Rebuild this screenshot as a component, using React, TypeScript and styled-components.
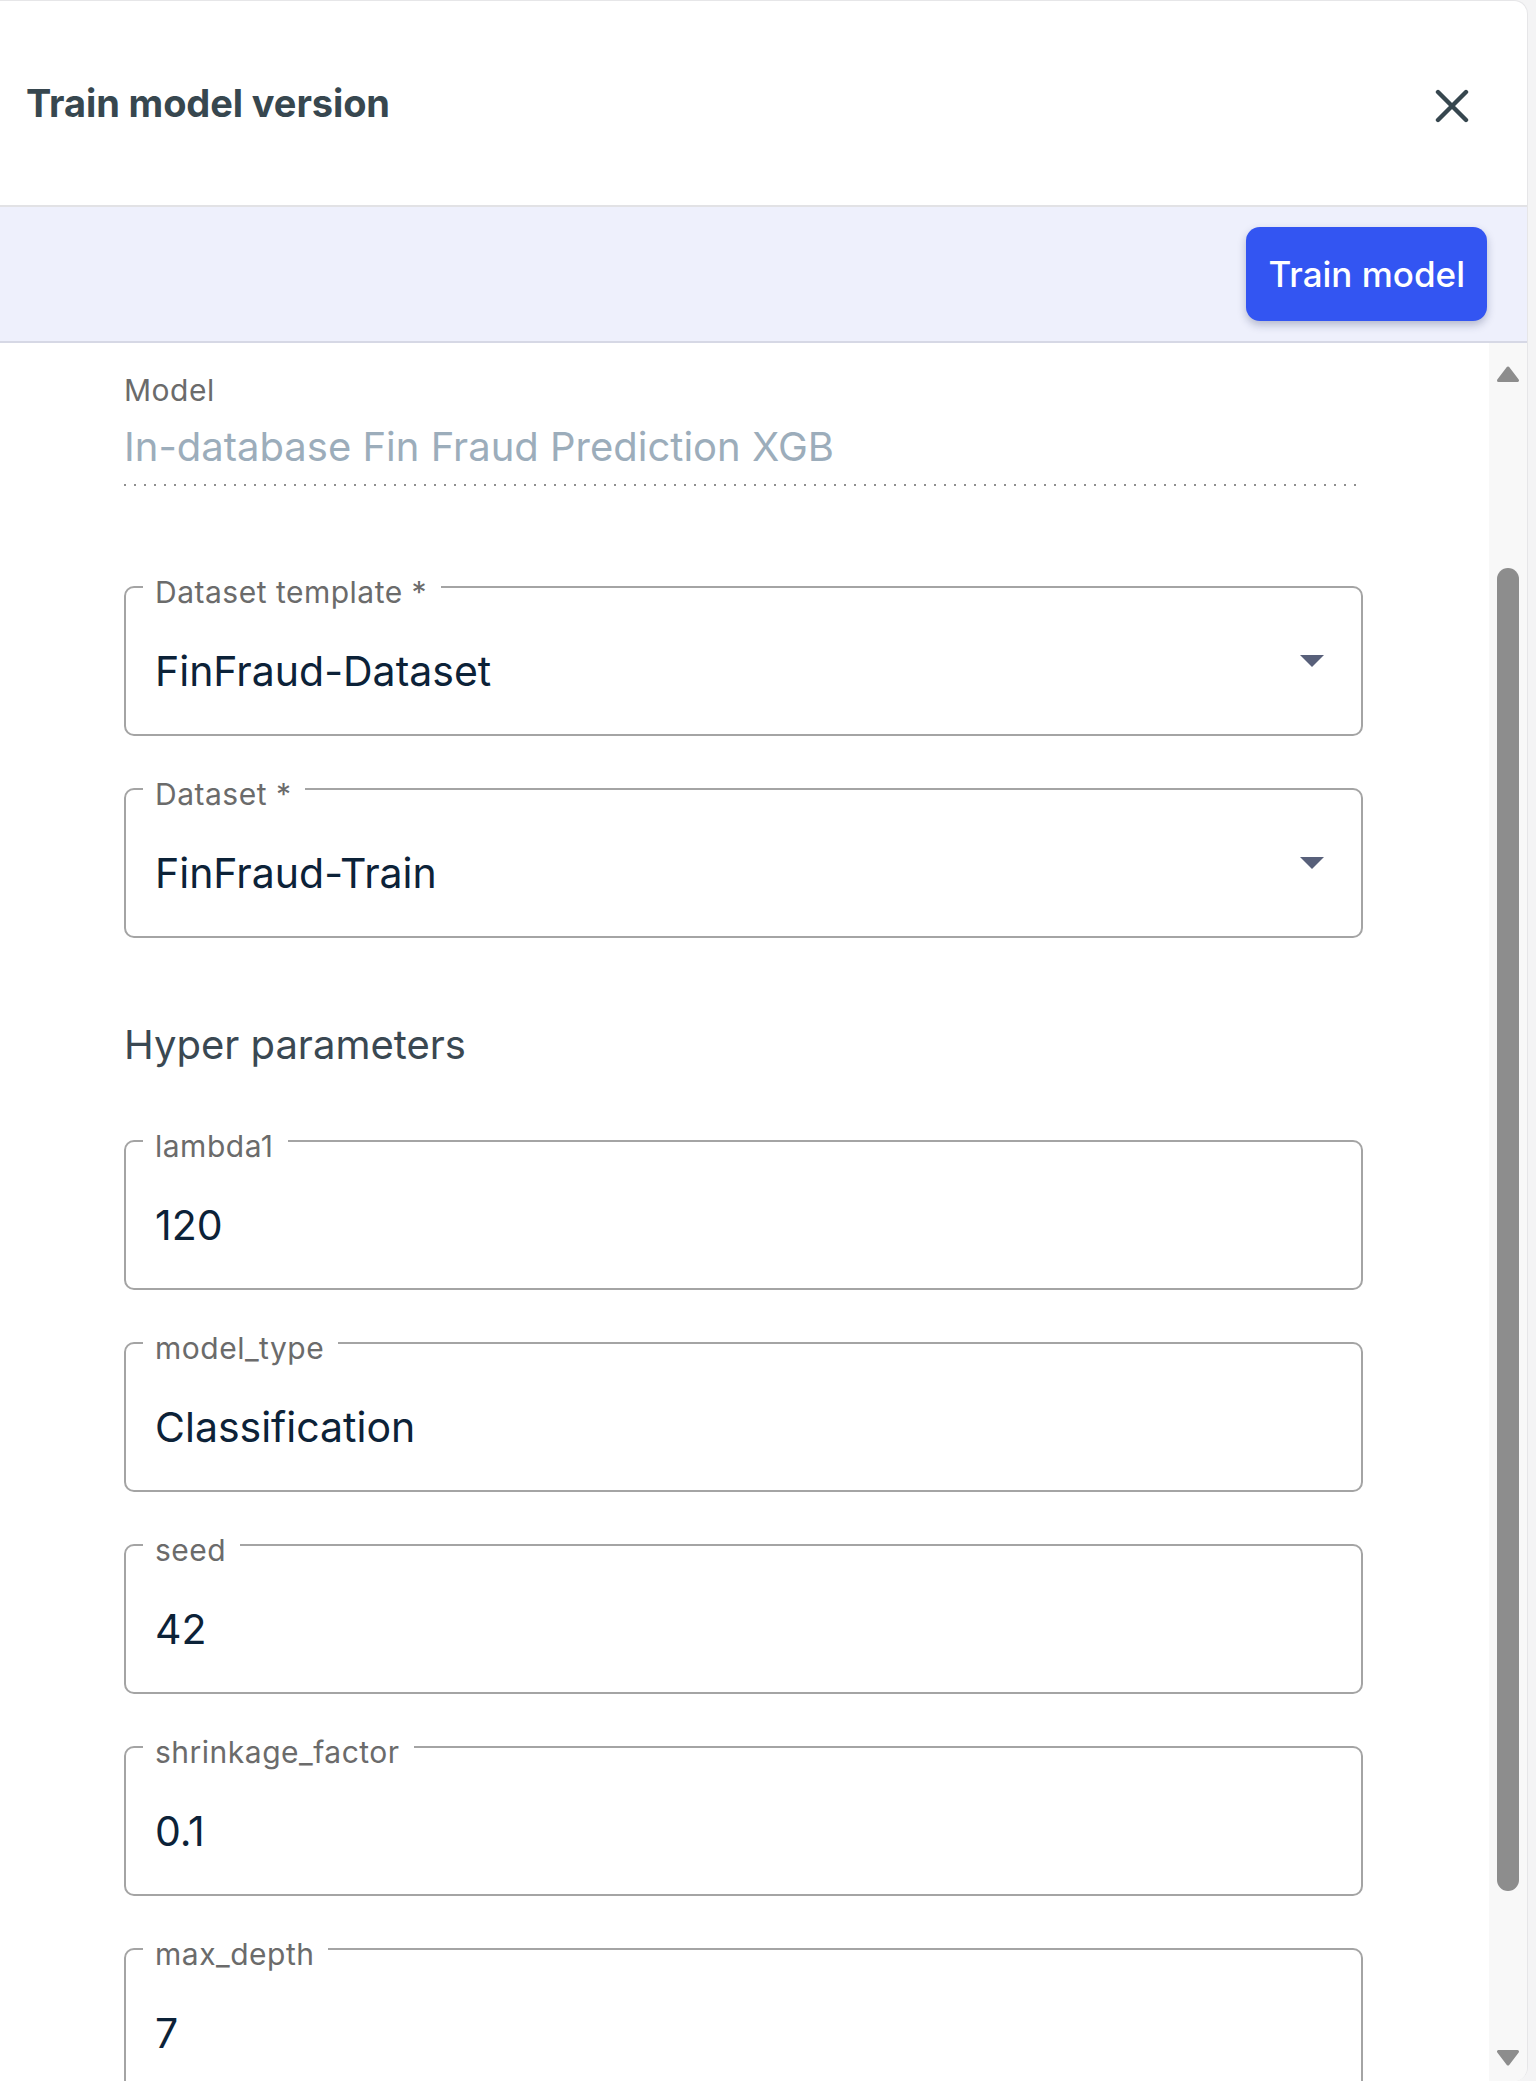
import React from "react";
import styled, { createGlobalStyle } from "styled-components";

const GlobalStyle = createGlobalStyle`
  html, body { margin: 0; padding: 0; }
  body {
    background: #f4f4f5;
    font-family: Inter, "Noto Sans", sans-serif;
    -webkit-font-smoothing: antialiased;
  }
  * { box-sizing: border-box; }
`;

const Panel = styled.div`
  width: 1528px;
  height: 2081px;
  display: flex;
  flex-direction: column;
  background: #ffffff;
  border-top: 1px solid #e6e6e8;
  border-right: 1px solid #e6e6e8;
  border-radius: 0 14px 14px 0;
  overflow: hidden;
`;

const Header = styled.header`
  height: 206px;
  flex: none;
  display: flex;
  align-items: center;
  justify-content: space-between;
  padding: 0 58px 0 26px;
  border-bottom: 2px solid #e2e2e5;
`;

const Title = styled.h2`
  margin: 0;
  font-size: 38px;
  font-weight: 700;
  color: #37474f;
  letter-spacing: -0.1px;
`;

const CloseButton = styled.button`
  border: none;
  background: none;
  padding: 0;
  margin-top: 6px;
  display: flex;
  color: #37474f;
  cursor: pointer;
`;

const Toolbar = styled.div`
  height: 136px;
  flex: none;
  display: flex;
  align-items: center;
  justify-content: flex-end;
  padding-right: 40px;
  background: #eef0fc;
  border-bottom: 2px solid #d6d8e5;
`;

const PrimaryButton = styled.button`
  height: 94px;
  padding: 0 22px;
  border: none;
  border-radius: 14px;
  background: #3355f2;
  color: #ffffff;
  font-family: Inter, sans-serif;
  font-size: 35px;
  font-weight: 500;
  box-shadow: 0 4px 8px rgba(30, 40, 90, 0.28);
  cursor: pointer;
`;

const Body = styled.div`
  flex: 1;
  min-height: 0;
  display: flex;
`;

const Content = styled.div`
  flex: 1;
  overflow: hidden;
  padding: 29px 126px 0 124px;
  display: flex;
  flex-direction: column;
`;

const StaticField = styled.div`
  display: flex;
  flex-direction: column;
  padding-bottom: 14px;
  background: linear-gradient(to right, #8e8e8e 2px, transparent 2px) left bottom / 10px 2px repeat-x;
`;

const StaticLabel = styled.span`
  font-size: 30px;
  line-height: 36px;
  color: #6b6b6b;
  letter-spacing: 0.5px;
`;

const StaticValue = styled.span`
  margin-top: 14px;
  font-size: 40px;
  line-height: 50px;
  color: #9cadbb;
`;

const FieldGroup = styled.div<{ $top: number }>`
  display: flex;
  flex-direction: column;
  gap: 33px;
  margin-top: ${(p) => p.$top}px;
`;

const SectionHeading = styled.h3`
  margin: 82px 0 0;
  font-size: 40px;
  line-height: 50px;
  font-weight: 400;
  color: #3a4852;
`;

const Outline = styled.fieldset`
  margin: 0;
  min-width: 0;
  padding: 39px 37px 38px 0;
  border: 2px solid #a4a4a4;
  border-radius: 10px;
  flex: none;
`;

const Legend = styled.legend`
  margin-left: 17px;
  padding: 10px 14px 0 12px;
  font-size: 30px;
  line-height: 30px;
  color: #6b6b6b;
  letter-spacing: 0.5px;
`;

const ValueRow = styled.div`
  display: flex;
  align-items: center;
  justify-content: space-between;
  padding-left: 29px;
`;

const Value = styled.span`
  font-size: 41px;
  line-height: 50px;
  color: #0c2238;
`;

const Caret = styled.svg`
  flex: none;
  margin-bottom: 20px;
`;

const ScrollRail = styled.div`
  width: 38px;
  flex: none;
  display: flex;
  flex-direction: column;
  align-items: center;
  padding: 22px 0 14px;
  background: #f8f8f8;
`;

const Thumb = styled.div<{ $offset: number; $size: number }>`
  width: 22px;
  height: ${(p) => p.$size}px;
  margin-top: ${(p) => p.$offset}px;
  border-radius: 11px;
  background: #8d8d8d;
  flex: none;
`;

const RailArrow = styled.svg<{ $end?: boolean }>`
  flex: none;
  margin-top: ${(p) => (p.$end ? "auto" : "0")};
`;

const CaretIcon = () => (
  <Caret width="24" height="12" viewBox="0 0 24 12">
    <path d="M0 0 H24 L12 12 Z" fill="#58607a" />
  </Caret>
);

const OutlinedField = ({ label, value, select }: { label: string; value: string; select?: boolean }) => (
  <Outline>
    <Legend>{label}</Legend>
    <ValueRow>
      <Value>{value}</Value>
      {select && <CaretIcon />}
    </ValueRow>
  </Outline>
);

const hyper = [
  { label: "lambda1", value: "120" },
  { label: "model_type", value: "Classification" },
  { label: "seed", value: "42" },
  { label: "shrinkage_factor", value: "0.1" },
  { label: "max_depth", value: "7" },
  { label: "min_node_size", value: "1" },
];

export default function App() {
  return (
    <>
      <GlobalStyle />
      <Panel>
        <Header>
          <Title>Train model version</Title>
          <CloseButton aria-label="Close">
            <svg width="34" height="34" viewBox="0 0 34 34">
              <path d="M3 3 L31 31 M31 3 L3 31" stroke="currentColor" strokeWidth="4.4" strokeLinecap="round" fill="none" />
            </svg>
          </CloseButton>
        </Header>
        <Toolbar>
          <PrimaryButton>Train model</PrimaryButton>
        </Toolbar>
        <Body>
          <Content>
            <StaticField>
              <StaticLabel>Model</StaticLabel>
              <StaticValue>In-database Fin Fraud Prediction XGB</StaticValue>
            </StaticField>
            <FieldGroup $top={81}>
              <OutlinedField label="Dataset template *" value="FinFraud-Dataset" select />
              <OutlinedField label="Dataset *" value="FinFraud-Train" select />
            </FieldGroup>
            <SectionHeading>Hyper parameters</SectionHeading>
            <FieldGroup $top={51}>
              {hyper.map((h) => (
                <OutlinedField key={h.label} label={h.label} value={h.value} />
              ))}
            </FieldGroup>
          </Content>
          <ScrollRail>
            <RailArrow width="24" height="18" viewBox="0 0 24 18">
              <path d="M12 3 L21.5 15.5 L2.5 15.5 Z" fill="#8d8d8d" stroke="#8d8d8d" strokeWidth="3" strokeLinejoin="round" />
            </RailArrow>
            <Thumb $offset={185} $size={1323} />
            <RailArrow $end width="24" height="18" viewBox="0 0 24 18">
              <path d="M2.5 2.5 L21.5 2.5 L12 15 Z" fill="#8d8d8d" stroke="#8d8d8d" strokeWidth="3" strokeLinejoin="round" />
            </RailArrow>
          </ScrollRail>
        </Body>
      </Panel>
    </>
  );
}
